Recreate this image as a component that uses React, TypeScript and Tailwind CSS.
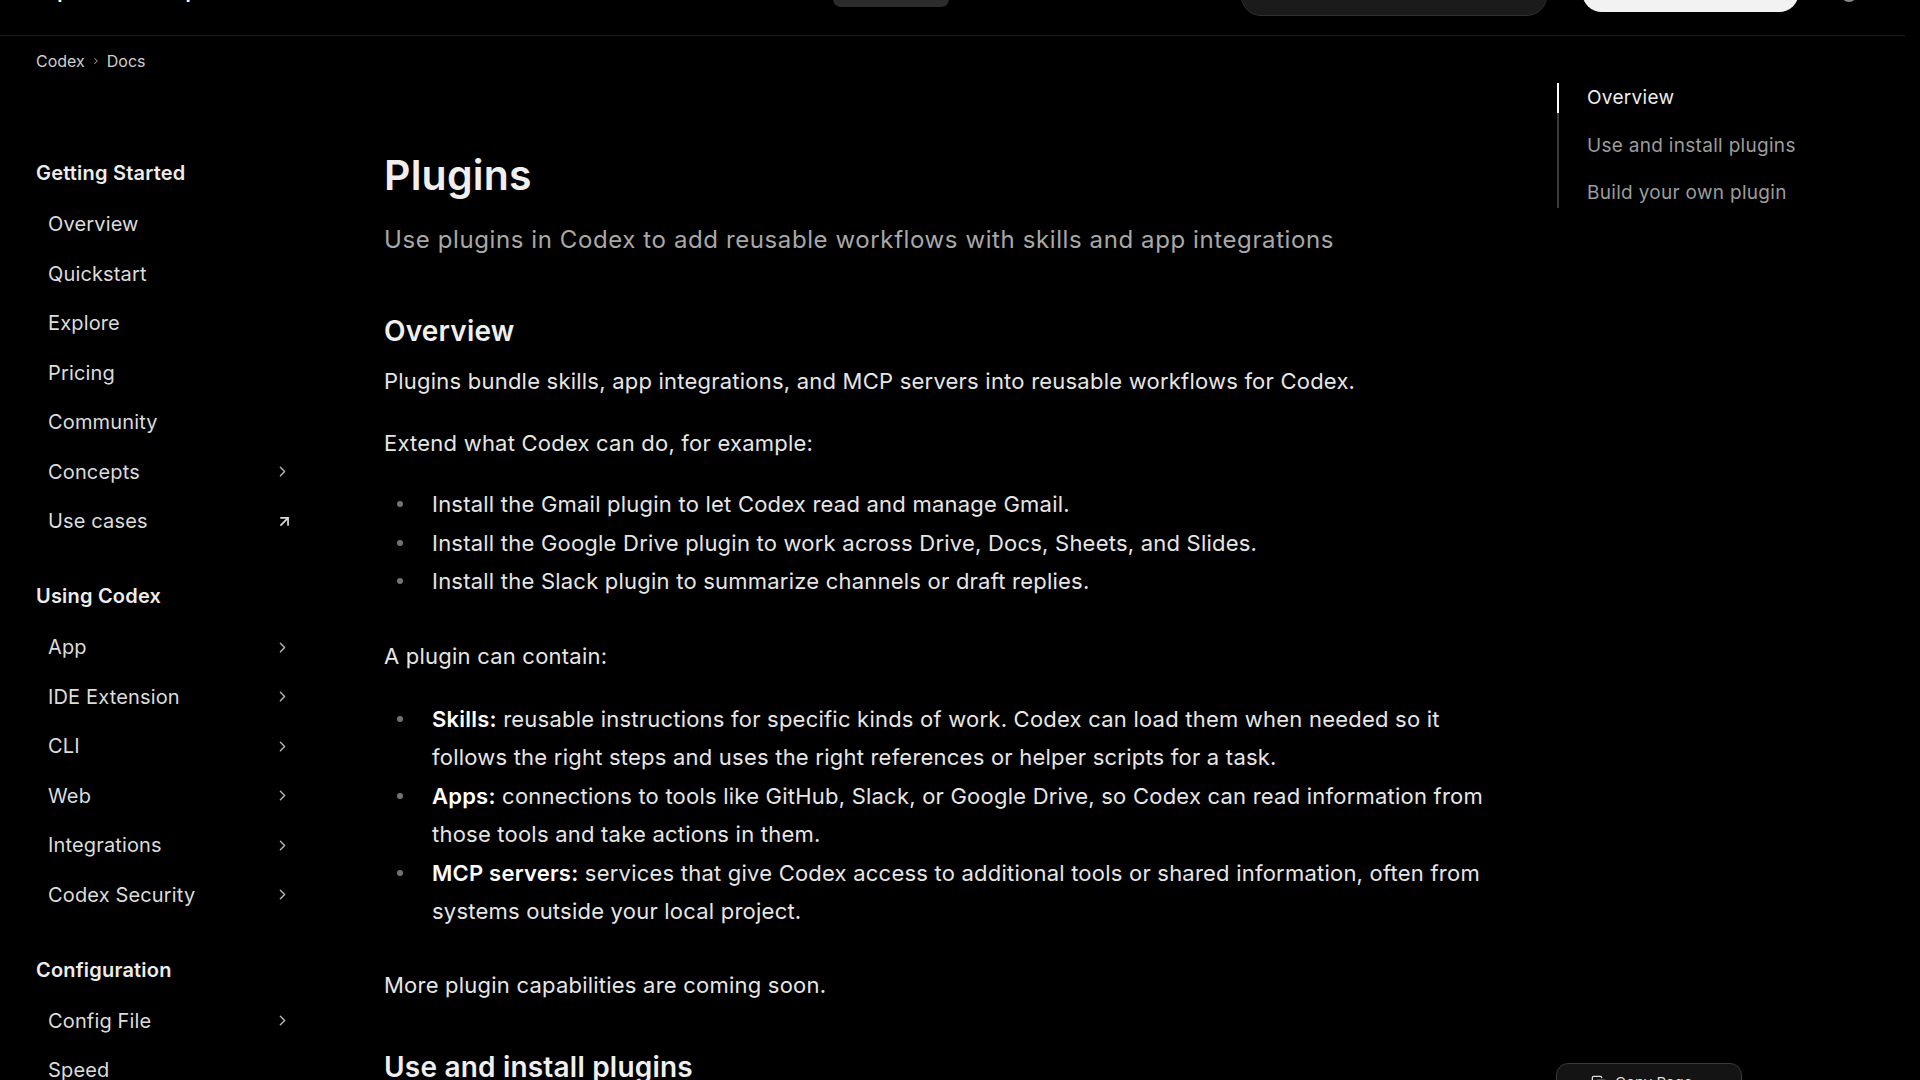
import { ChevronRight, ArrowUpRight, Copy } from 'lucide-react';

const sections = [
  {
    title: 'Getting Started',
    items: [
      { label: 'Overview' },
      { label: 'Quickstart' },
      { label: 'Explore' },
      { label: 'Pricing' },
      { label: 'Community' },
      { label: 'Concepts', icon: 'chevron' },
      { label: 'Use cases', icon: 'external' },
    ],
  },
  {
    title: 'Using Codex',
    items: [
      { label: 'App', icon: 'chevron' },
      { label: 'IDE Extension', icon: 'chevron' },
      { label: 'CLI', icon: 'chevron' },
      { label: 'Web', icon: 'chevron' },
      { label: 'Integrations', icon: 'chevron' },
      { label: 'Codex Security', icon: 'chevron' },
    ],
  },
  {
    title: 'Configuration',
    items: [{ label: 'Config File', icon: 'chevron' }, { label: 'Speed' }],
  },
];

const examples = [
  'Install the Gmail plugin to let Codex read and manage Gmail.',
  'Install the Google Drive plugin to work across Drive, Docs, Sheets, and Slides.',
  'Install the Slack plugin to summarize channels or draft replies.',
];

const contents = [
  {
    term: 'Skills:',
    text: 'reusable instructions for specific kinds of work. Codex can load them when needed so it follows the right steps and uses the right references or helper scripts for a task.',
  },
  {
    term: 'Apps:',
    text: 'connections to tools like GitHub, Slack, or Google Drive, so Codex can read information from those tools and take actions in them.',
  },
  {
    term: 'MCP servers:',
    text: 'services that give Codex access to additional tools or shared information, often from systems outside your local project.',
  },
];

function Bullet({ children }: { children: React.ReactNode }) {
  return (
    <li className="flex">
      <span className="flex h-[38.5px] w-[48px] shrink-0 items-center pl-[13px]">
        <span className="h-[6px] w-[6px] rounded-full bg-[#6f747c]" />
      </span>
      <span className="leading-[38.5px]">{children}</span>
    </li>
  );
}

export default function App() {
  return (
    <div className="h-screen overflow-hidden bg-black font-['Inter','Liberation_Sans',sans-serif] text-white">
      {/* top bar, page is scrolled a bit */}
      <header className="mr-[15px] flex h-[36px] items-start border-b border-[#1c1c1c]">
        <div className="w-[833px] shrink-0 pl-[42px]">
          <div className="-mt-[21px] text-[20px] font-semibold leading-[24px] text-white">OpenAI Developers</div>
        </div>
        <div className="-mt-[33px] h-10 w-[116px] shrink-0 rounded-lg bg-[#2c2c2c]" />
        <div className="ml-[292px] -mt-[24px] h-10 w-[306px] shrink-0 rounded-full border border-[#2e2e2e] bg-[#1b1b1b]" />
        <div className="ml-[35px] -mt-[28px] h-10 w-[217px] shrink-0 rounded-full bg-[#f2f2f2]" />
        <div className="ml-[42px] -mt-[14px] h-[16px] w-[16px] shrink-0 rounded-full border-2 border-[#8a8a8a]" />
      </header>

      <div className="flex">
        {/* sidebar */}
        <aside className="w-[384px] shrink-0 pl-[36px]">
          <div className="mt-[15px] flex items-center gap-[6px] text-[16px] leading-[20px] text-[#cfcfcf]">
            <span>Codex</span>
            <ChevronRight size={10} strokeWidth={2.5} className="text-[#9a9a9a]" />
            <span>Docs</span>
          </div>

          <nav className="mt-[90px] w-[267px]">
            {sections.map((section, si) => (
              <div key={section.title} className={si > 0 ? 'mt-[38px]' : ''}>
                <div className="text-[20px] font-semibold leading-[24px] tracking-[0.2px] text-[#ececec]">
                  {section.title}
                </div>
                <ul className="mt-[14.5px]">
                  {section.items.map((item) => (
                    <li
                      key={item.label}
                      className="flex h-[49.5px] items-center justify-between rounded-lg px-3 text-[20px] tracking-[0.15px] text-[#dcdcdc]"
                    >
                      <span>{item.label}</span>
                      {item.icon === 'chevron' && (
                        <ChevronRight size={17} strokeWidth={2} className="text-[#b5b5b5]" />
                      )}
                      {item.icon === 'external' && (
                        <ArrowUpRight size={17} strokeWidth={2.4} className="mr-[-2px] text-[#dcdcdc]" />
                      )}
                    </li>
                  ))}
                </ul>
              </div>
            ))}
          </nav>
        </aside>

        {/* main article */}
        <main className="w-[1112px] shrink-0 pt-[115px] text-[22px] tracking-[0.22px] text-[#e6e6e6]">
          <h1 className="text-[41px] font-semibold leading-[48px] tracking-[0.2px] text-[#efefef]">Plugins</h1>
          <p className="mt-[25px] text-[24px] leading-[32px] tracking-[0.6px] text-[#a8a8a8]">
            Use plugins in Codex to add reusable workflows with skills and app integrations
          </p>

          <h2 className="mt-[56.5px] text-[28px] font-semibold leading-[36px] tracking-[0.2px] text-[#efefef]">
            Overview
          </h2>
          <p className="mt-[16.5px] leading-[32px]">
            Plugins bundle skills, app integrations, and MCP servers into reusable workflows for Codex.
          </p>
          <p className="mt-[30px] leading-[32px]">Extend what Codex can do, for example:</p>
          <ul className="mt-[26px]">
            {examples.map((e) => (
              <Bullet key={e}>{e}</Bullet>
            ))}
          </ul>

          <p className="mt-[39px] leading-[32px]">A plugin can contain:</p>
          <ul className="mt-[28px]">
            {contents.map((c) => (
              <Bullet key={c.term}>
                <strong className="font-semibold text-white">{c.term}</strong> {c.text}
              </Bullet>
            ))}
          </ul>

          <p className="mt-[38px] leading-[32px]">More plugin capabilities are coming soon.</p>

          <h2 className="mt-[48px] text-[28px] font-semibold leading-[36px] tracking-[0.2px] text-[#efefef]">
            Use and install plugins
          </h2>
        </main>

        {/* on this page */}
        <aside className="ml-[61px] shrink-0 pt-[47px]">
          <ul className="flex flex-col gap-[17.7px] border-l-2 border-[#3a3a3a] text-[19px] leading-[30px] tracking-[0.3px]">
            <li className="-ml-[2px] border-l-2 border-white pl-[28px] text-[#ececec]">Overview</li>
            <li className="pl-[28px] text-[#9c9c9c]">Use and install plugins</li>
            <li className="pl-[28px] text-[#9c9c9c]">Build your own plugin</li>
          </ul>

          <button className="-ml-[1px] mt-[855px] flex h-10 w-[186px] items-center gap-[8px] rounded-xl border border-[#3a3a3a] bg-[#141414] pl-[34px] text-[15px] text-[#dcdcdc]">
            <Copy size={16} />
            Copy Page
          </button>
        </aside>
      </div>
    </div>
  );
}
